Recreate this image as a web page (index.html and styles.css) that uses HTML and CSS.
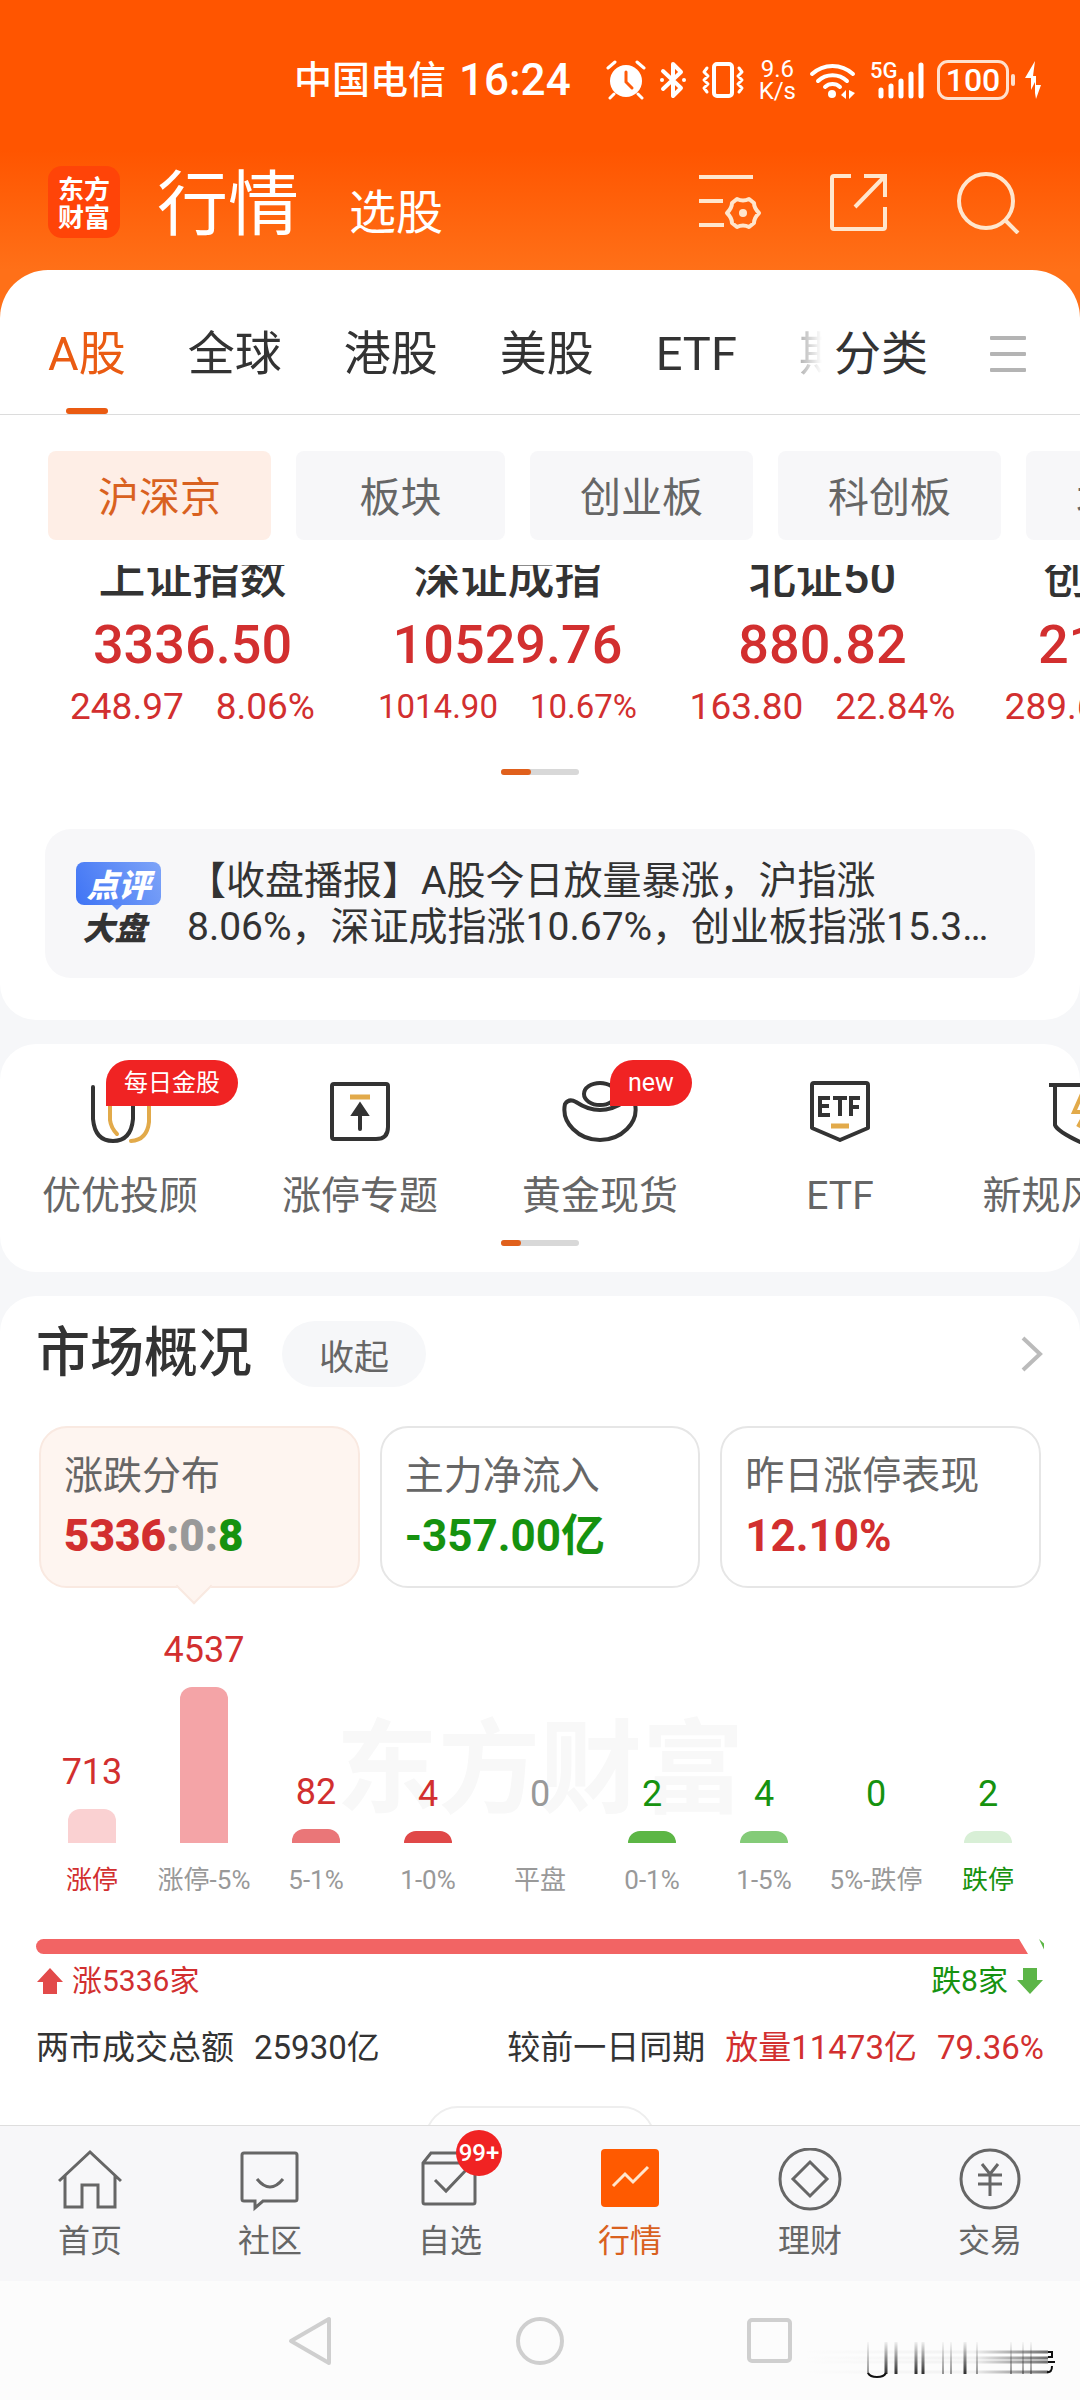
FILE: index.html
```html
<!DOCTYPE html>
<html lang="zh-CN">
<head>
  <meta charset="UTF-8">
  <meta name="viewport" content="width=device-width, initial-scale=1">
  <title>行情</title>
  <link rel="stylesheet" href="styles.css">
</head>

<body>

  <header class="top">
    <!-- Status bar -->
    <div class="status">
      <span class="carrier">中国电信</span>
      <span class="clock">16:24</span>
      <svg class="alarm" width="40" height="40" viewBox="0 0 40 40">
        <circle cx="20" cy="21" r="16" fill="#fff"/>
        <path d="M8 34l-4 4M32 34l4 4M2 8l7-6M38 8l-7-6" stroke="#fff" stroke-width="3" stroke-linecap="round"/>
        <path d="M20 12v10l6 6" fill="none" stroke="#ff5a08" stroke-width="3" stroke-linecap="round"/>
      </svg>
      <svg width="28" height="40" viewBox="0 0 28 40">
        <path d="M4 11l18 17-8 8V4l8 8L4 29" fill="none" stroke="#fff" stroke-width="4" stroke-linejoin="round" stroke-linecap="round"/>
        <circle cx="3" cy="20" r="2" fill="#fff"/><circle cx="25" cy="20" r="2" fill="#fff"/>
      </svg>
      <svg width="46" height="40" viewBox="0 0 46 40">
        <rect x="14" y="4" width="18" height="32" rx="3" fill="none" stroke="#fff" stroke-width="4"/>
        <path d="M7 8l-3 4 4 4-4 4 4 4-4 4 3 4M39 8l3 4-4 4 4 4-4 4 4 4-3 4" fill="none" stroke="#fff" stroke-width="3" stroke-linecap="round" stroke-linejoin="round"/>
      </svg>
      <span class="speed">9.6<br>K/s</span>
      <svg width="48" height="40" viewBox="0 0 48 40">
        <path d="M3 14a30 30 0 0 1 41 0M9 21a21 21 0 0 1 29 0M16 27a11 11 0 0 1 15 0" fill="none" stroke="#fff" stroke-width="4" stroke-linecap="round"/>
        <circle cx="23" cy="34" r="4" fill="#fff"/>
        <path d="M37 30v9l-5-4zM40 30v9l6-6z" fill="#fff"/>
      </svg>
      <div class="signal">
        <span>5G</span>
        <svg width="54" height="40" viewBox="0 0 54 40">
          <path d="M11 30v6M21 26v10M31 21v15M41 14v22M51 5v31" stroke="#fff" stroke-width="5" stroke-linecap="round"/>
        </svg>
      </div>
      <div class="battery"><span>100</span></div>
      <svg class="bolt" width="18" height="40" viewBox="0 0 18 40">
        <path d="M11 1L1 18h6v12l4-8v11l1 6 5-14h-5v-9h-3z" fill="#fff"/>
      </svg>
    </div>

    <!-- Title row -->
    <div class="title-row">
      <div class="logo">东方<br>财富</div>
      <nav class="titles">
        <a class="title-main" href="#quotes">行情</a>
        <a class="title-sub" href="#pick">选股</a>
      </nav>
      <div class="tools">
        <button aria-label="设置">
          <svg width="64" height="60" viewBox="0 0 64 60">
            <g fill="none" stroke="#ffe6cd" stroke-width="4">
              <path d="M1 5h54M1 29h24M1 53h25"/>
              <path d="M39 27q6 3 12 0l5 4q0 5 5 10-5 5-5 10l-5 4q-6-3-12 0l-5-4q0-5-5-10 5-5 5-10z" stroke-linejoin="round"/>
            </g>
            <circle cx="45" cy="41" r="4" fill="#ffe6cd"/>
          </svg>
        </button>
        <button aria-label="分享">
          <svg width="60" height="60" viewBox="0 0 60 60">
            <path d="M22 4H5q-2 0-2 2v49q0 2 2 2h49q2 0 2-2V35M35 4h21v21M56 4L26 35" fill="none" stroke="#ffe6cd" stroke-width="4"/>
          </svg>
        </button>
        <button aria-label="搜索">
          <svg width="64" height="64" viewBox="0 0 64 64">
            <circle cx="30" cy="31" r="27" fill="none" stroke="#ffe6cd" stroke-width="4"/>
            <path d="M49 50l13 13" stroke="#ffe6cd" stroke-width="4"/>
          </svg>
        </button>
      </div>
    </div>
  </header>

  <main>

    <!-- Market tabs + index quotes -->
    <section class="sheet">
      <nav class="tabs">
        <div class="tab-list">
          <a class="active" href="#a">A股</a>
          <a href="#global">全球</a>
          <a href="#hk">港股</a>
          <a href="#us">美股</a>
          <a href="#etf">ETF</a>
          <a href="#futures">期货</a>
        </div>
        <a class="tab-all" href="#all">分类</a>
        <button class="burger" aria-label="菜单"><i></i><i></i><i></i></button>
      </nav>

      <div class="chips">
        <button class="active">沪深京</button>
        <button>板块</button>
        <button>创业板</button>
        <button>科创板</button>
        <button>北交所</button>
      </div>

      <div class="indexes">
        <div class="index">
          <h2>上证指数</h2>
          <strong>3336.50</strong>
          <p><span>248.97</span><span>8.06%</span></p>
        </div>
        <div class="index small">
          <h2>深证成指</h2>
          <strong>10529.76</strong>
          <p><span>1014.90</span><span>10.67%</span></p>
        </div>
        <div class="index">
          <h2>北证50</h2>
          <strong>880.82</strong>
          <p><span>163.80</span><span>22.84%</span></p>
        </div>
        <div class="index">
          <h2>创业板指</h2>
          <strong>2175.57</strong>
          <p><span>289.69</span><span>15.36%</span></p>
        </div>
      </div>
      <div class="dots"><i class="wide"></i></div>

      <a class="news" href="#news">
        <span class="news-tag"><b>点评</b><em>大盘</em></span>
        <span class="news-text">【收盘播报】A股今日放量暴涨，沪指涨<br>8.06%，深证成指涨10.67%，创业板指涨15.3…</span>
      </a>
    </section>

    <!-- Shortcuts -->
    <section class="card shortcuts">
      <div class="shortcut-list">
        <a href="#advisor">
          <svg width="64" height="64" viewBox="0 0 64 64" fill="none" stroke-width="4" stroke-linecap="round">
            <path d="M22 20v20q1 8 7 14M61 20v22q-2 18-18 19" stroke="#e2aa4a"/>
            <path d="M5 7v32q2 22 20 22t20-22V7" stroke="#333"/>
          </svg>
          <span class="badge">每日金股</span>
          <span>优优投顾</span>
        </a>
        <a href="#limit">
          <svg width="64" height="64" viewBox="0 0 64 64" fill="none" stroke="#333" stroke-width="4">
            <path d="M6 4h52q2 0 2 2v41q0 12-12 12H6q-2 0-2-2V6q0-2 2-2z"/>
            <path d="M32 49V30" stroke-linecap="round"/>
            <path d="M32 25l-6 9h12z" fill="#333"/>
            <path d="M22 17h20" stroke="#e2aa4a" stroke-width="5"/>
          </svg>
          <span>涨停专题</span>
        </a>
        <a href="#gold">
          <svg width="80" height="64" viewBox="0 0 80 64" fill="none" stroke="#333" stroke-width="4">
            <ellipse cx="40" cy="14" rx="16" ry="11"/>
            <path d="M5 24q4-6 11-2 12 8 24 8t24-8q7-4 11 2 3 14-8 25-11 11-27 11T13 49Q2 38 5 24z" fill="#fff"/>
          </svg>
          <span class="badge new">new</span>
          <span>黄金现货</span>
        </a>
        <a href="#etf-zone">
          <svg width="64" height="64" viewBox="0 0 64 64" fill="none" stroke="#333" stroke-width="4">
            <path d="M6 3h52q2 0 2 2v43L32 60 4 48V5q0-2 2-2z" stroke-linejoin="round"/>
            <path d="M22 18H12v17h10M12 26h9M25 18h14M32 18v18M52 18H43v18M43 27h8"/>
            <path d="M23 46h18" stroke="#e2aa4a" stroke-width="5"/>
          </svg>
          <span>ETF</span>
        </a>
        <a href="#risk">
          <svg width="64" height="64" viewBox="0 0 64 64" fill="none" stroke="#333" stroke-width="4">
            <path d="M1 5h62M7 5v40q2 6 25 17 23-11 25-17V5"/>
            <path d="M34 14L26 32h12l-8 15" stroke="#e2aa4a"/>
          </svg>
          <span>新规风险股</span>
        </a>
      </div>
      <div class="dots"><i></i></div>
    </section>

    <!-- Market overview -->
    <section class="card overview">
      <div class="overview-head">
        <h2>市场概况</h2>
        <button class="fold">收起</button>
        <a class="more" href="#overview" aria-label="更多">
          <svg width="24" height="36" viewBox="0 0 24 36"><path d="M3 2l17 16L3 34" fill="none" stroke="#bbb" stroke-width="4"/></svg>
        </a>
      </div>

      <div class="stats">
        <button class="stat active">
          <span>涨跌分布</span>
          <strong><b class="up">5336</b><b class="flat">:0:</b><b class="down">8</b></strong>
        </button>
        <button class="stat">
          <span>主力净流入</span>
          <strong class="down">-357.00亿</strong>
        </button>
        <button class="stat">
          <span>昨日涨停表现</span>
          <strong class="up">12.10%</strong>
        </button>
      </div>

      <div class="chart">
        <div class="chart-mark">东方财富</div>
        <div class="col up"><b>713</b><i class="r1" style="height: 34px"></i><span>涨停</span></div>
        <div class="col up"><b>4537</b><i class="r2" style="height: 156px"></i><span class="grey">涨停-5%</span></div>
        <div class="col up"><b>82</b><i class="r3" style="height: 14px"></i><span class="grey">5-1%</span></div>
        <div class="col up"><b>4</b><i class="r4" style="height: 12px"></i><span class="grey">1-0%</span></div>
        <div class="col flat"><b>0</b><i style="height: 12px"></i><span class="grey">平盘</span></div>
        <div class="col down"><b>2</b><i class="g4" style="height: 12px"></i><span class="grey">0-1%</span></div>
        <div class="col down"><b>4</b><i class="g3" style="height: 12px"></i><span class="grey">1-5%</span></div>
        <div class="col down"><b>0</b><i style="height: 12px"></i><span class="grey">5%-跌停</span></div>
        <div class="col down"><b>2</b><i class="g1" style="height: 12px"></i><span>跌停</span></div>
      </div>

      <div class="ratio"><i class="ratio-up"></i><i class="ratio-down"></i></div>
      <div class="ratio-text">
        <span class="up">
          <svg width="28" height="28" viewBox="0 0 28 28"><path d="M14 1l13 14h-6v12H7V15H1z" fill="#e24a4a"/></svg>涨5336家
        </span>
        <span class="down">
          跌8家<svg width="28" height="28" viewBox="0 0 28 28"><path d="M14 27L1 13h6V1h14v12h6z" fill="#5cb548"/></svg>
        </span>
      </div>

      <div class="turnover">
        <p><span>两市成交总额</span><span>25930亿</span></p>
        <p><span>较前一日同期</span><span class="up">放量11473亿</span><span class="up">79.36%</span></p>
      </div>

      <div class="peek"><button aria-label="展开"></button></div>
    </section>

  </main>

  <!-- Bottom tabs -->
  <nav class="tabbar">
    <a href="#home">
      <svg width="64" height="64" viewBox="0 0 64 64"><path d="M1 33L32 4l31 29M7 28v31h17V37h16v22h17V28"/></svg>
      首页
    </a>
    <a href="#community">
      <svg width="64" height="64" viewBox="0 0 64 64"><path d="M6 5h51q2 0 2 2v44q0 2-2 2H25l-8 7v-7H6q-2 0-2-2V7q0-2 2-2zM19 31q13 16 26 0"/></svg>
      社区
    </a>
    <a href="#watch">
      <svg width="64" height="64" viewBox="0 0 64 64"><path d="M5 15l8-10h38l6 10v39q0 2-2 2H7q-2 0-2-2zM5 15h52M17 32l11 11 21-22"/></svg>
      <span class="count">99+</span>
      自选
    </a>
    <a class="active" href="#quotes">
      <svg width="64" height="64" viewBox="0 0 64 64"><rect class="fill" x="3" y="1" width="58" height="58" rx="4"/><path class="line" d="M15 38l12-12 8 8 15-15"/></svg>
      行情
    </a>
    <a href="#wealth">
      <svg width="64" height="64" viewBox="0 0 64 64"><circle cx="32" cy="31" r="30"/><path d="M32 14l17 17-17 17-17-17z"/></svg>
      理财
    </a>
    <a href="#trade">
      <svg width="64" height="64" viewBox="0 0 64 64"><circle cx="32" cy="31" r="29"/><path d="M24 16l8 10 8-10M32 26v22M20 27h24M20 36h24"/></svg>
      交易
    </a>
  </nav>

  <!-- System navigation -->
  <div class="sysnav">
    <button aria-label="返回"><svg width="48" height="52" viewBox="0 0 48 52"><path d="M43 4v44L5 26z"/></svg></button>
    <button aria-label="主页"><svg width="48" height="52" viewBox="0 0 48 52"><circle cx="24" cy="26" r="22"/></svg></button>
    <button aria-label="最近"><svg width="48" height="52" viewBox="0 0 48 52"><rect x="3" y="5" width="41" height="41" rx="3"/></svg></button>
    <svg class="smudge" width="256" height="40" viewBox="0 0 256 40">
      <defs>
        <linearGradient id="v" x1="0" y1="0" x2="0" y2="36" gradientUnits="userSpaceOnUse">
          <stop offset="0" stop-color="#222" stop-opacity="0"/><stop offset="1" stop-color="#222"/>
        </linearGradient>
        <linearGradient id="h" x1="0" y1="0" x2="248" y2="0" gradientUnits="userSpaceOnUse">
          <stop offset="0" stop-color="#333" stop-opacity="0"/><stop offset="0.7" stop-color="#333" stop-opacity="0.05"/><stop offset="1" stop-color="#333" stop-opacity="0.7"/>
        </linearGradient>
      </defs>
      <path d="M86 2v32M96 2v32M116 2v32M123 2v32M165 2v32" stroke="url(#v)" stroke-width="3" fill="none"/>
      <path d="M68 2v32M143 2v32M151 2v32M177 2v32M211 2v32M223 2v32M231 2v32" stroke="url(#v)" stroke-width="2" opacity="0.5" fill="none"/>
      <path d="M0 12h248M0 18h248M0 22h248M0 32h248" stroke="url(#h)" stroke-width="3" fill="none"/>
      <path d="M68 33q2 4 9 4t9-4M248 12h4v5h-4M248 22h7M252 26q0 7-5 6" stroke="#111" stroke-width="2" fill="none"/>
    </svg>
  </div>

</body>
</html>
```

FILE: styles.css
```css
* {
  box-sizing: border-box;
}

body {
  margin: 0;
  min-height: 100vh;
  display: flex;
  flex-direction: column;
  background: #f6f7f9;
  color: #333;
  font-family: Roboto, "Noto Sans CJK SC", sans-serif;
  overflow-x: hidden;
}

h2, p {
  margin: 0;
}

a {
  color: inherit;
  text-decoration: none;
}

button {
  font-family: inherit;
  color: inherit;
  border: none;
  background: none;
  padding: 0;
}

svg {
  display: block;
  flex: none;
}

.up { color: #d22f2f; }
.down { color: #16920f; }
.flat { color: #999; }

/* Header */
.top {
  background: linear-gradient(#ff5500 150px, #ff7018 270px);
  padding: 50px 0 80px;
  color: #fff;
}

.status {
  height: 60px;
  display: flex;
  align-items: center;
  justify-content: flex-end;
  gap: 13px;
  padding-right: 38px;
}

.carrier {
  font-size: 38px;
  line-height: 56px;
  font-weight: 500;
}

.clock {
  font-size: 44px;
  font-weight: 500;
}

.alarm {
  margin-left: 22px;
}

.speed {
  font-size: 24px;
  line-height: 22px;
  text-align: center;
}

.signal {
  position: relative;
}

.signal span {
  position: absolute;
  left: 0;
  top: 0;
  font-size: 22px;
  line-height: 22px;
  font-weight: 500;
}

.battery {
  position: relative;
  width: 72px;
  height: 40px;
  margin-right: 2px;
  border: 3px solid #ffe0cc;
  border-radius: 11px;
  font-size: 32px;
  line-height: 34px;
  font-weight: 500;
  text-align: center;
}

.battery::after {
  content: "";
  position: absolute;
  right: -9px;
  top: 11px;
  width: 4px;
  height: 12px;
  border-radius: 2px;
  background: #ffe0cc;
}

.title-row {
  display: flex;
  align-items: center;
  height: 72px;
  margin-top: 56px;
  padding: 0 60px 0 48px;
}

.logo {
  width: 72px;
  height: 72px;
  padding-top: 8px;
  border-radius: 14px;
  background: #ff4408;
  font-family: "Noto Sans CJK SC", sans-serif;
  font-size: 26px;
  line-height: 28px;
  font-weight: 700;
  text-align: center;
}

.titles {
  flex: 1;
  display: flex;
  align-items: baseline;
  gap: 50px;
  height: 72px;
  margin-left: 37px;
  line-height: 78px;
}

.title-main {
  font-size: 71px;
}

.title-sub {
  font-size: 47px;
}

.tools {
  display: flex;
  align-items: center;
  gap: 67px;
}

/* Market tabs + indexes */
.sheet {
  margin-top: -48px;
  padding-bottom: 42px;
  border-radius: 48px 48px 36px 36px;
  background: #fff;
  overflow: hidden;
}

.tabs {
  display: flex;
  padding: 54px 54px 0 48px;
  border-bottom: 1px solid #dcdcdc;
  font-size: 47px;
  line-height: 60px;
  white-space: nowrap;
}

.tab-list {
  flex: 1;
  min-width: 0;
  display: flex;
  gap: 62px;
  height: 90px;
  overflow: hidden;
  -webkit-mask-image: linear-gradient(to left, transparent, #000 60px);
  mask-image: linear-gradient(to left, transparent, #000 60px);
}

.tab-list .active {
  color: #ea5b12;
}

.tab-list .active::after {
  content: "";
  display: block;
  width: 42px;
  height: 6px;
  margin: 24px auto 0;
  border-radius: 3px;
  background: #ea5b12;
}

.tab-all {
  margin: 0 62px 0 12px;
}

.burger {
  display: flex;
  flex-direction: column;
  gap: 12px;
  height: 60px;
  padding-top: 12px;
}

.burger i {
  width: 36px;
  height: 4px;
  border-radius: 1px;
  background: #b4b4b4;
}

.chips {
  display: flex;
  gap: 25px;
  margin-top: 36px;
  padding-left: 48px;
  overflow: hidden;
}

.chips button {
  flex: none;
  min-width: 209px;
  height: 89px;
  padding: 0 50px 4px;
  border-radius: 8px;
  background: #f7f7f9;
  color: #666;
  font-size: 41px;
}

.chips .active {
  background: #feeee6;
  color: #d9611f;
}

.indexes {
  display: flex;
  margin-top: 25px;
  padding-left: 35px;
  overflow: hidden;
}

.index {
  flex: none;
  width: 315px;
  text-align: center;
  color: #d22f2f;
  white-space: nowrap;
}

.index h2 {
  margin-top: -18px;
  color: #333;
  font-size: 47px;
  line-height: 60px;
  font-weight: 500;
}

.index strong {
  display: block;
  margin-top: 8px;
  font-size: 54px;
  line-height: 60px;
  font-weight: 500;
}

.index p {
  display: flex;
  justify-content: center;
  gap: 32px;
  margin-top: 10px;
  font-size: 37px;
  line-height: 44px;
}

.index.small p {
  font-size: 33px;
}

.dots {
  width: 78px;
  height: 6px;
  margin: 40px auto 0;
  border-radius: 3px;
  background: #d8d8d8;
}

.dots i {
  display: block;
  width: 20px;
  height: 6px;
  border-radius: 3px;
  background: #e0601c;
}

.dots .wide {
  width: 30px;
}

.news {
  display: flex;
  align-items: center;
  height: 149px;
  margin: 54px 45px 0;
  padding-left: 31px;
  border-radius: 26px;
  background: #f7f7f9;
}

.news-tag {
  flex: none;
  width: 85px;
  font-family: "Noto Sans CJK SC", sans-serif;
  font-style: italic;
  text-align: center;
}

.news-tag b {
  position: relative;
  display: block;
  border-radius: 8px;
  background: linear-gradient(60deg, #3f74f5, #7ea4f8);
  color: #fff;
  font-size: 32px;
  line-height: 43px;
  font-weight: 900;
}

.news-tag b::after {
  content: "";
  position: absolute;
  left: 36px;
  top: 100%;
  border: 5px solid transparent;
  border-top-color: #5f8cf7;
}

.news-tag em {
  display: block;
  margin-top: 2px;
  padding-right: 8px;
  font-size: 32px;
  line-height: 38px;
  font-weight: 900;
}

.news-text {
  margin-left: 26px;
  font-size: 39px;
  line-height: 46px;
  white-space: nowrap;
}

/* Cards */
.card {
  margin-top: 24px;
  border-radius: 36px;
  background: #fff;
}

.shortcuts {
  padding: 36px 0 26px;
  overflow: hidden;
}

.shortcut-list {
  display: flex;
}

.shortcut-list a {
  position: relative;
  flex: none;
  width: 240px;
  display: flex;
  flex-direction: column;
  align-items: center;
  gap: 29px;
  color: #666;
  font-size: 39px;
  line-height: 46px;
}

.badge {
  position: absolute;
  left: 106px;
  top: -20px;
  padding: 0 18px;
  border-radius: 23px 23px 23px 0;
  background: #f02323;
  color: #fff;
  font-size: 24px;
}

.badge.new {
  left: 130px;
  font-size: 25px;
}

.shortcuts .dots {
  margin-top: 21px;
}

/* Market overview */
.overview {
  flex: 1;
  padding: 25px 36px 0;
  border-radius: 36px 36px 0 0;
}

.overview-head {
  display: flex;
  align-items: center;
}

.overview-head h2 {
  font-size: 54px;
  line-height: 66px;
  font-weight: 500;
}

.fold {
  width: 144px;
  height: 66px;
  margin-left: 30px;
  border-radius: 33px;
  background: #f6f7f9;
  color: #666;
  font-size: 35px;
}

.more {
  margin-left: auto;
}

.stats {
  display: grid;
  grid-template-columns: repeat(3, 1fr);
  gap: 20px;
  margin: 39px 3px 0;
}

.stat {
  position: relative;
  height: 162px;
  padding: 2px 0 0 23px;
  border: 2px solid #e6e6e6;
  border-radius: 28px;
  text-align: left;
}

.stat span {
  display: block;
  color: #666;
  font-size: 39px;
  line-height: 46px;
}

.stat strong {
  display: block;
  margin-top: 10px;
  font-size: 44px;
  line-height: 54px;
  font-weight: 700;
}

.stat.active {
  background: #fef5f0;
  border-color: #f9e9e1;
}

/* pointer under the selected stat */
.stat.active::after {
  content: "";
  position: absolute;
  left: 140px;
  bottom: -13px;
  width: 24px;
  height: 24px;
  background: #fef5f0;
  border: solid #f9e9e1;
  border-width: 0 2px 2px 0;
  transform: rotate(45deg);
}

.chart {
  position: relative;
  display: grid;
  grid-template-columns: repeat(9, 1fr);
  align-items: end;
  margin-top: 42px;
}

.chart-mark {
  position: absolute;
  left: 0;
  right: 0;
  top: 80px;
  color: #f8f8f8;
  font-size: 102px;
  line-height: 120px;
  font-weight: 700;
  text-align: center;
}

.col {
  position: relative;
  display: flex;
  flex-direction: column;
  align-items: center;
  white-space: nowrap;
}

.col b {
  margin-bottom: 17px;
  font-size: 36px;
  line-height: 40px;
  font-weight: 400;
}

.col i {
  width: 48px;
  border-radius: 12px 12px 0 0;
}

.col span {
  margin-top: 19px;
  font-size: 26px;
  line-height: 36px;
}

.col .grey { color: #999; }

.r1 { background: #fad1d2; }
.r2 { background: #f4a4a7; }
.r3 { background: #ea7678; }
.r4 { background: #e04848; }
.g4 { background: #5cb645; }
.g3 { background: #84cb78; }
.g1 { background: #d8efd6; }

.ratio {
  display: flex;
  gap: 11px;
  height: 15px;
  margin-top: 41px;
}

.ratio-up {
  flex: 1;
  border-radius: 8px 0 0 8px;
  background: #f26464;
  clip-path: polygon(0 0, calc(100% - 9px) 0, 100% 100%, 0 100%);
}

.ratio-down {
  width: 5px;
  background: #5cb645;
  clip-path: polygon(0 0, 100% 30%, 100% 70%);
}

.ratio-text {
  display: flex;
  justify-content: space-between;
  margin-top: 7px;
  font-size: 30px;
  line-height: 40px;
}

.ratio-text span {
  display: flex;
  align-items: center;
  gap: 8px;
}

.turnover {
  display: flex;
  justify-content: space-between;
  margin-top: 25px;
  font-size: 33px;
  line-height: 44px;
}

.turnover p {
  display: flex;
  gap: 20px;
}

.peek {
  height: 19px;
  margin-top: 36px;
  overflow: hidden;
}

.peek button {
  display: block;
  width: 230px;
  height: 66px;
  margin: 0 auto;
  border: 2px solid #eee;
  border-radius: 33px;
}

/* Bottom tabs */
.tabbar {
  display: grid;
  grid-template-columns: repeat(6, 1fr);
  height: 156px;
  padding-top: 22px;
  border-top: 1px solid #dedede;
  background: #f7f7f9;
  color: #666;
  font-size: 32px;
  line-height: 40px;
}

.tabbar a {
  position: relative;
  display: flex;
  flex-direction: column;
  align-items: center;
  gap: 9px;
}

.tabbar svg {
  fill: none;
  stroke: #666;
  stroke-width: 3;
}

.tabbar .active {
  color: #d9611f;
}

.tabbar .fill {
  fill: #ff5a00;
  stroke: none;
}

.tabbar .line {
  stroke: #ffe6cd;
}

.count {
  position: absolute;
  left: 50%;
  top: -18px;
  width: 46px;
  height: 46px;
  margin-left: 6px;
  border-radius: 50%;
  background: #f02323;
  color: #fff;
  font-size: 24px;
  line-height: 46px;
  font-weight: 500;
  text-align: center;
}

/* System navigation */
.sysnav {
  position: relative;
  display: flex;
  align-items: center;
  justify-content: center;
  gap: 182px;
  height: 119px;
  background: #fcfcfc;
}

.sysnav button svg {
  fill: none;
  stroke: #cfcfcf;
  stroke-width: 4;
  stroke-linejoin: round;
}

.smudge {
  position: absolute;
  right: 24px;
  bottom: 20px;
}
```
